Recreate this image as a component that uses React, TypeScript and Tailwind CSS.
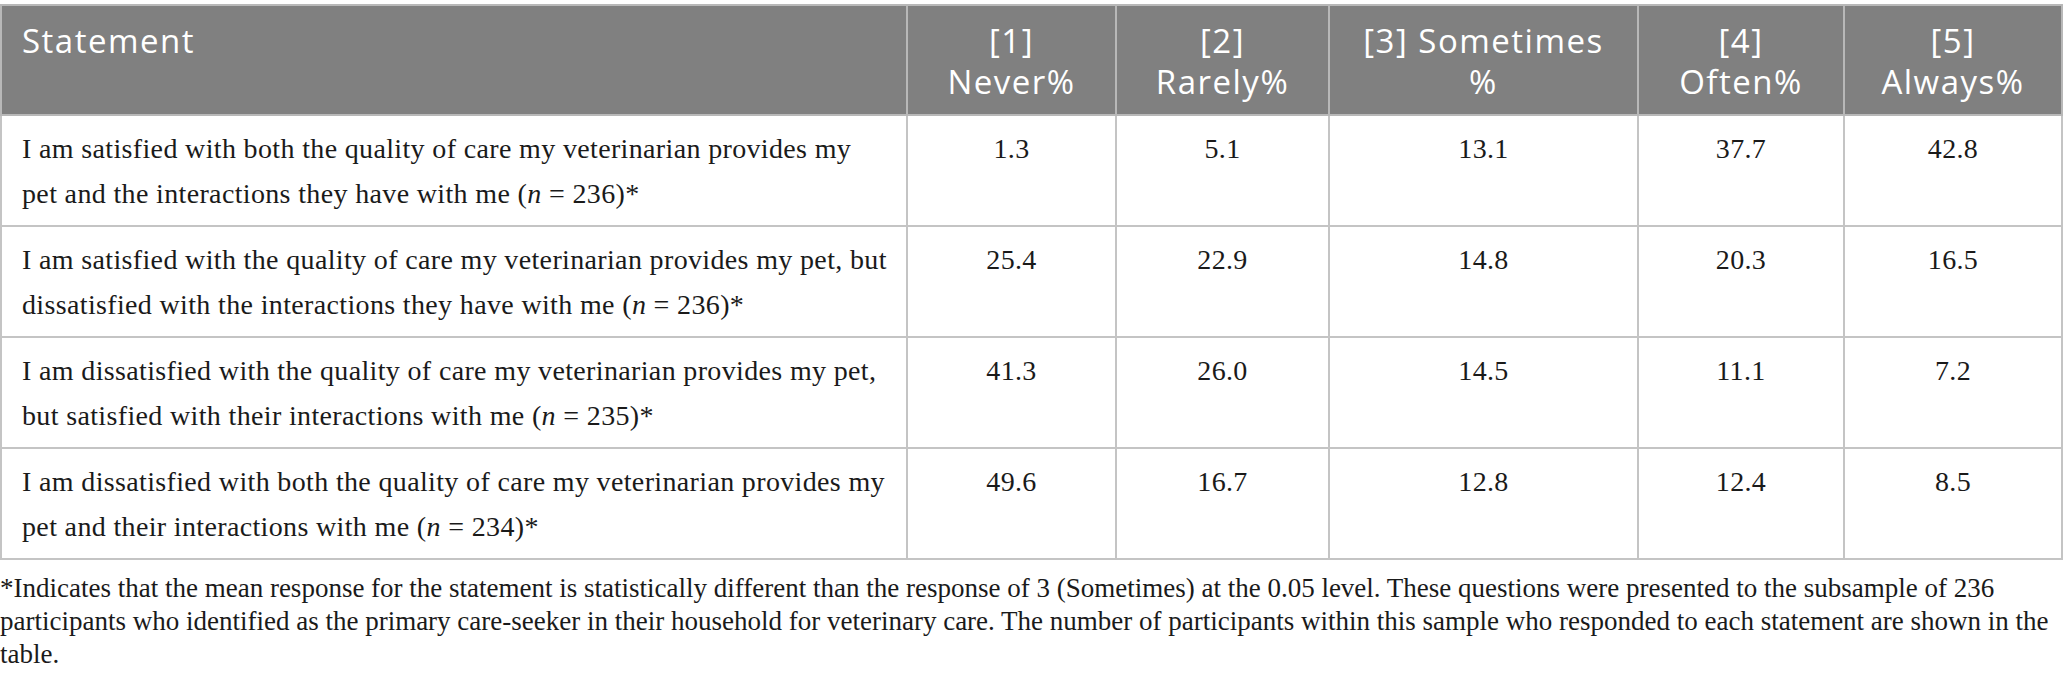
import React from 'react';

const rows = [
    { l1: 'I am satisfied with both the quality of care my veterinarian provides my', l2: 'pet and the interactions they have with me', n: '236', vals: ['1.3', '5.1', '13.1', '37.7', '42.8'] },
    { l1: 'I am satisfied with the quality of care my veterinarian provides my pet, but', l2: 'dissatisfied with the interactions they have with me', n: '236', vals: ['25.4', '22.9', '14.8', '20.3', '16.5'] },
    { l1: 'I am dissatisfied with the quality of care my veterinarian provides my pet,', l2: 'but satisfied with their interactions with me', n: '235', vals: ['41.3', '26.0', '14.5', '11.1', '7.2'] },
    { l1: 'I am dissatisfied with both the quality of care my veterinarian provides my', l2: 'pet and their interactions with me', n: '234', vals: ['49.6', '16.7', '12.8', '12.4', '8.5'] },
];

const headers = [
    ['[1]', 'Never%'],
    ['[2]', 'Rarely%'],
    ['[3] Sometimes', '%'],
    ['[4]', 'Often%'],
    ['[5]', 'Always%'],
];

export default function App() {
    return (
        <div className="w-[2064px] h-[687px] bg-white pt-[4px] overflow-hidden">
            <table className="w-[2062px] border-collapse table-fixed">
                <colgroup>
                    <col className="w-[906px]" />
                    <col className="w-[209px]" />
                    <col className="w-[213px]" />
                    <col className="w-[309px]" />
                    <col className="w-[206px]" />
                    <col className="w-[218px]" />
                </colgroup>
                <thead>
                    <tr className="bg-[#808080] text-white h-[110px]" style={{ fontFamily: '"Open Sans", "Noto Sans", sans-serif' }}>
                        <th className="border-2 border-[#b8b8b8] align-top text-left font-normal text-[33px] tracking-[1.5px] leading-[41px] px-5 pt-[14px]">Statement</th>
                        {headers.map((h, i) => (
                            <th key={i} className="border-2 border-[#b8b8b8] align-top text-center font-normal text-[33px] tracking-[1.5px] leading-[41px] px-1 pt-[14px] whitespace-nowrap">
                                {h[0]}<br />{h[1]}
                            </th>
                        ))}
                    </tr>
                </thead>
                <tbody className="text-[#1a1a1a]" style={{ fontFamily: '"Liberation Serif", "Times New Roman", serif' }}>
                    {rows.map((r, i) => (
                        <tr key={i} className="h-[111px]">
                            <td className="border-2 border-[#c4c4c4] align-top text-left text-[28px] tracking-[0.35px] leading-[45px] px-5 pt-[10px] whitespace-nowrap">
                                {r.l1}<br />{r.l2} (<i>n</i> = {r.n})*
                            </td>
                            {r.vals.map((v, j) => (
                                <td key={j} className="border-2 border-[#c4c4c4] align-top text-center text-[28px] tracking-[0.35px] leading-[45px] pt-[10px]">{v}</td>
                            ))}
                        </tr>
                    ))}
                </tbody>
            </table>
            <p className="mt-[12px] text-[27px] leading-[33px] text-[#1a1a1a] whitespace-nowrap" style={{ fontFamily: '"Liberation Serif", "Times New Roman", serif' }}>
                *Indicates that the mean response for the statement is statistically different than the response of 3 (Sometimes) at the 0.05 level. These questions were presented to the subsample of 236<br />
                participants who identified as the primary care-seeker in their household for veterinary care. The number of participants within this sample who responded to each statement are shown in the<br />
                table.
            </p>
        </div>
    );
}
